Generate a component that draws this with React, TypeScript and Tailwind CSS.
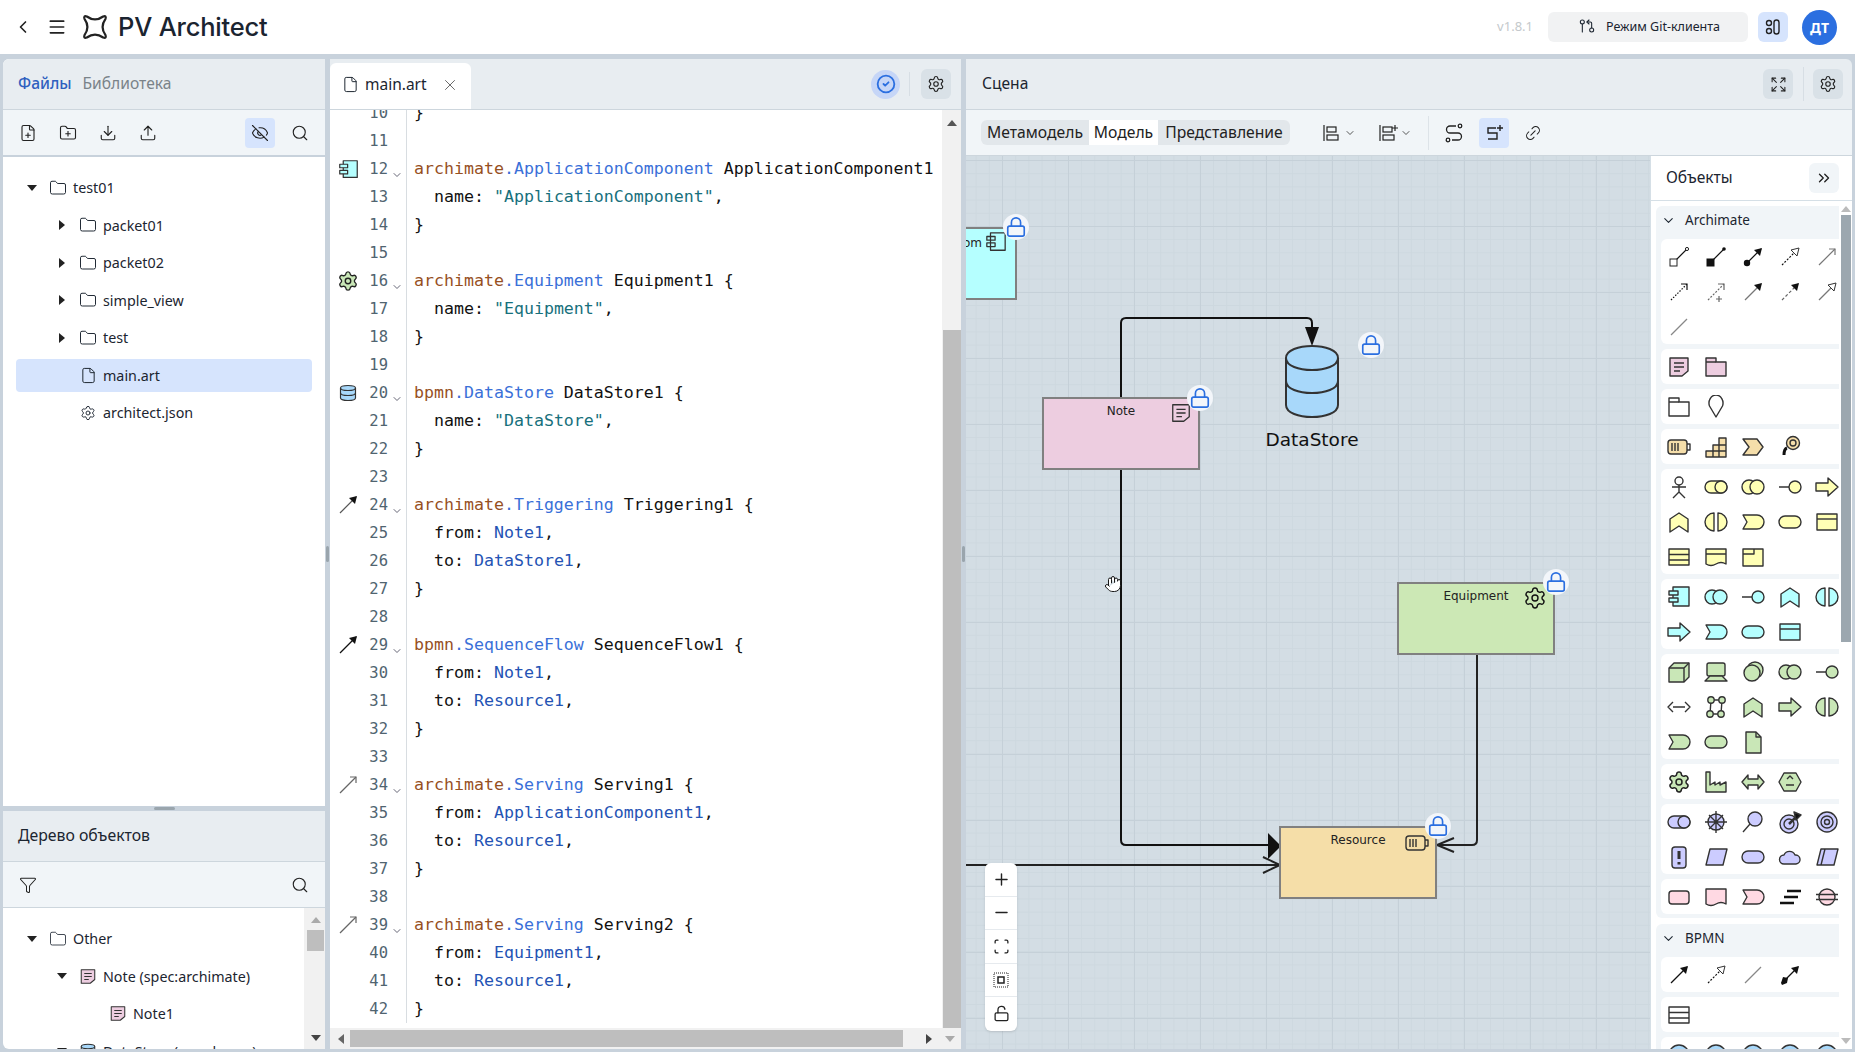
import React from 'react';
import {
  ChevronLeft, Menu, File, Folder, FilePlus, FolderPlus, Download, Upload, EyeOff, Search, Settings, X,
  CircleCheck, Expand, GitPullRequestArrow, ChevronDown, ChevronsRight, Funnel, Link2, Lock,
  LockOpen, Plus, Minus, Hand, Scan,
} from 'lucide-react';

const YELLOW = '#ffffb5';
const CYAN = '#b5ffff';
const GREEN = '#c9e7b7';
const PURPLE = '#ccccff';
const PINK = '#ffd9e3';
const TAN = '#f5deaa';
const NOTE = '#edcde0';
const BLUE = '#a8d8fa';

function Shape({ name, fill = '#fff', size = 24 }: { name: string; fill?: string; size?: number }) {
  let body: React.ReactNode = null;
  switch (name) {
    case 'note':
      body = <><path d="M3 3H21V16L15 21H3Z" /><path d="M7 8H17M7 12H17M7 16H13" fill="none" /></>;
      break;
    case 'pkg':
      body = <><path d="M2 3H12V7H22V21H2Z" /><path d="M2 7H12" fill="none" /></>;
      break;
    case 'pin':
      body = <path d="M12 22L5.5 11A7 8 0 1 1 18.500 11Z" />;
      break;
    case 'resource':
      body = <><rect x="1" y="5" width="19" height="14" rx="3" /><path d="M20 9H23V15H20M5 8V16M8 8V16M11 8V16" fill="none" /></>;
      break;
    case 'capability':
      body = <path d="M2 22V16H9V10H15V3H22V22ZM9 16H22M15 10H22M9 16V22M15 10V22" />;
      break;
    case 'chevron':
      body = <path d="M2 4H16L22 12L16 20H2L8 12Z" />;
      break;
    case 'course':
      body = <><circle cx="15" cy="8" r="6.500" /><circle cx="15" cy="8" r="3" /><path d="M9 13Q6 14 6 20" fill="none" strokeWidth="3" stroke="#111" /></>;
      break;
    case 'actor':
      body = <><circle cx="12" cy="6" r="4" /><path d="M12 10V17M5 12H19M12 17L6 23M12 17L18 23" fill="none" /></>;
      break;
    case 'collab':
      body = <><rect x="1" y="6" width="22" height="12" rx="6" /><circle cx="17" cy="12" r="6" /></>;
      break;
    case 'inter':
      body = <><circle cx="8" cy="12" r="7" /><circle cx="16" cy="12" r="7" /></>;
      break;
    case 'iface':
      body = <><path d="M1 12H11" fill="none" /><circle cx="17" cy="12" r="6" /></>;
      break;
    case 'arrow':
      body = <path d="M1 8H13V3L23 12L13 21V16H1Z" />;
      break;
    case 'fn':
      body = <path d="M3 22V9L12 3L21 9V22L12 16Z" />;
      break;
    case 'halves':
      body = <path d="M10 3A9 9 0 0 0 10 21ZM14 3A9 9 0 0 1 14 21Z" />;
      break;
    case 'event':
      body = <path d="M2 5H16A7 7 0 0 1 16 19H2L6 12Z" />;
      break;
    case 'service':
      body = <rect x="1" y="6" width="22" height="12" rx="6" />;
      break;
    case 'object':
      body = <><rect x="2" y="4" width="20" height="16" /><path d="M2 9H22" fill="none" /></>;
      break;
    case 'contract':
      body = <><rect x="2" y="4" width="20" height="16" /><path d="M2 9.500H22M2 15H22" fill="none" /></>;
      break;
    case 'repr':
      body = <><path d="M2 4H22V19Q17 16 12 19T2 19Z" /><path d="M2 9H22" fill="none" /></>;
      break;
    case 'product':
      body = <><rect x="2" y="4" width="20" height="17" /><path d="M2 9H13V4" fill="none" /></>;
      break;
    case 'component':
      body = <><rect x="6" y="2" width="16" height="19" /><rect x="2" y="6" width="9" height="4" /><rect x="2" y="13" width="9" height="4" /></>;
      break;
    case 'cube':
      body = <><path d="M2 8L7 3H22V17L17 22H2Z" /><path d="M2 8H17V22M17 8L22 3" fill="none" /></>;
      break;
    case 'device':
      body = <><rect x="3" y="3" width="18" height="13" rx="2" /><path d="M6 16H18L23 21H1Z" /></>;
      break;
    case 'system':
      body = <><circle cx="14" cy="10" r="8" /><circle cx="11" cy="13" r="8" /></>;
      break;
    case 'path':
      body = <path d="M6 7L1 12L6 17M18 7L23 12L18 17M6 12H18" fill="none" strokeDasharray="none" />;
      break;
    case 'network':
      body = <><path d="M7 5H18L17 19H6Z" fill="none" /><circle cx="7" cy="5" r="3.200" /><circle cx="18" cy="5" r="3.200" /><circle cx="6" cy="19" r="3.200" /><circle cx="17" cy="19" r="3.200" /></>;
      break;
    case 'artifact':
      body = <><path d="M5 2H15L20 7V23H5Z" /><path d="M15 2V7H20" fill="none" /></>;
      break;
    case 'gear':
      return <Settings size={size} fill={fill} stroke="#222" strokeWidth={1.500} />;
    case 'factory':
      body = <path d="M2 2H6V15L11 12V15L16 12V15L22 12V22H2Z" />;
      break;
    case 'dist':
      body = <path d="M7 5L1 12L7 19V15H17V19L23 12L17 5V9H7Z" />;
      break;
    case 'hex':
      body = <><path d="M6 3H18L23 12L18 21H6L1 12Z" /><path d="M8 15H16M9 9L12 6L15 9" fill="none" /></>;
      break;
    case 'driver':
      body = <><circle cx="12" cy="12" r="8" /><path d="M12 1V23M1 12H23M5 5L19 19M19 5L5 19" fill="none" /></>;
      break;
    case 'assess':
      body = <><circle cx="14" cy="9" r="7" /><path d="M9 14L2 22" fill="none" /></>;
      break;
    case 'goal':
      body = <><circle cx="11" cy="14" r="9" /><circle cx="11" cy="14" r="5" /><path d="M11 14L20 5" fill="none" strokeWidth="2.500" /><path d="M16 2L23 5L18 10Z" style={{ fill: '#111' }} /></>;
      break;
    case 'outcome':
      body = <><circle cx="12" cy="12" r="10" /><circle cx="12" cy="12" r="6" /><circle cx="12" cy="12" r="2.500" /></>;
      break;
    case 'principle':
      body = <><rect x="5" y="2" width="14" height="21" rx="3" /><path d="M12 6V14M12 17V19.500" fill="none" strokeWidth="3" /></>;
      break;
    case 'req':
      body = <path d="M6 4H23L19 20H2Z" />;
      break;
    case 'constraint':
      body = <path d="M6 4H23L19 20H2ZM10 4L6 20" />;
      break;
    case 'cloud':
      body = <path d="M6 19A4.500 4.500 0 0 1 6 10A6 6 0 0 1 17 10A4.500 4.500 0 0 1 18 19Z" />;
      break;
    case 'work':
      body = <rect x="2" y="6" width="20" height="13" rx="3" />;
      break;
    case 'deliver':
      body = <path d="M2 4H22V19Q17 16 12 19T2 19Z" />;
      break;
    case 'plateau':
      body = <path d="M9 6H23M6 12H20M2 18H16" fill="none" stroke="#111" strokeWidth="2.500" />;
      break;
    case 'gap':
      body = <><circle cx="12" cy="12" r="8" /><path d="M1 9.500H23M1 14.500H23" fill="none" /></>;
      break;
    case 'grouping':
      body = <><path d="M2 3H12V7H22V21H2Z" /><path d="M2 7H12" fill="none" /></>;
      break;
    case 'datastore':
      body = <><path d="M3 6C3 2 21 2 21 6V18C21 22 3 22 3 18Z" /><path d="M3 6C3 10 21 10 21 6M3 12C3 16 21 16 21 12" fill="none" /></>;
      break;
    case 'ball':
      body = <circle cx="12" cy="12" r="10" />;
      break;
  }
  return (
    <svg width={size} height={size} viewBox="0 0 24 24" fill={fill} stroke="#333" strokeWidth={1.400} strokeLinejoin="round">
      {body}
    </svg>
  );
}

function Rel({ color = '#111', dash, start, head, size = 20 }: { color?: string; dash?: string; start?: string; head?: string; size?: number }) {
  return (
    <svg width={size} height={size} viewBox="0 0 20 20" fill="none">
      <path d="M2 18L18 2" stroke={color} strokeWidth={1.200} strokeDasharray={dash} />
      {start === 'openSquare' && <rect x="1" y="12" width="7" height="7" fill="#fff" stroke="#222" />}
      {start === 'square' && <rect x="1" y="12" width="7" height="7" fill="#111" stroke="#111" />}
      {start === 'dot' && <circle cx="4" cy="16" r="3.200" fill="#111" />}
      {start === 'diamond' && <path d="M1 18L3 12L8 13L7 18L2 20Z" fill="#111" />}
      {head === 'smallOpen' && <circle cx="18" cy="2" r="1.600" fill="#fff" stroke="#222" />}
      {head === 'small' && <circle cx="18" cy="2" r="1.800" fill="#111" />}
      {head === 'fill' && <path d="M19 1L11 3L17 9Z" fill="#111" />}
      {head === 'open' && <path d="M12 2H18V8" stroke={color} strokeWidth={1.200} />}
      {head === 'hollow' && <path d="M19 1L11 3L17 9Z" fill="#fff" stroke="#333" />}
      {head === 'plus' && <path d="M12 2H18V8M13 14V20M10 17H16" stroke={color} strokeWidth={1.200} />}
    </svg>
  );
}

const relsA = [
  <Rel start="openSquare" head="smallOpen" />,
  <Rel start="square" head="small" />,
  <Rel start="dot" head="fill" />,
  <Rel dash="2 1.500" head="hollow" />,
  <Rel color="#777" head="open" />,
  <Rel dash="1.500 1.500" head="open" />,
  <Rel dash="2 1.500" color="#666" head="plus" />,
  <Rel color="#777" head="fill" />,
  <Rel dash="3 2" color="#666" head="fill" />,
  <Rel color="#777" head="hollow" />,
  <Rel color="#888" />,
];

const shapeCards: [string, string][][] = [
  [['note', NOTE], ['pkg', NOTE]],
  [['grouping', '#fff'], ['pin', '#fff']],
  [['resource', TAN], ['capability', TAN], ['chevron', TAN], ['course', TAN]],
  [['actor', '#fff'], ['collab', YELLOW], ['inter', YELLOW], ['iface', YELLOW], ['arrow', YELLOW], ['fn', YELLOW], ['halves', YELLOW], ['event', YELLOW], ['service', YELLOW], ['object', YELLOW], ['contract', YELLOW], ['repr', YELLOW], ['product', YELLOW]],
  [['component', CYAN], ['inter', CYAN], ['iface', CYAN], ['fn', CYAN], ['halves', CYAN], ['arrow', CYAN], ['event', CYAN], ['service', CYAN], ['object', CYAN]],
  [['cube', GREEN], ['device', GREEN], ['system', GREEN], ['inter', GREEN], ['iface', GREEN], ['path', 'none'], ['network', GREEN], ['fn', GREEN], ['arrow', GREEN], ['halves', GREEN], ['event', GREEN], ['service', GREEN], ['artifact', GREEN]],
  [['gear', GREEN], ['factory', GREEN], ['dist', GREEN], ['hex', GREEN]],
  [['collab', PURPLE], ['driver', PURPLE], ['assess', PURPLE], ['goal', PURPLE], ['outcome', PURPLE], ['principle', PURPLE], ['req', PURPLE], ['service', PURPLE], ['cloud', PURPLE], ['constraint', PURPLE]],
  [['work', PINK], ['deliver', PINK], ['event', PINK], ['plateau', PINK], ['gap', PINK]],
];

function Card({ children }: { children: React.ReactNode }) {
  return (
    <div className="bg-white rounded-l-md overflow-hidden">
      <div className="grid grid-cols-[repeat(5,37px)] auto-rows-[35px] -ml-[1px] w-[185px]">{children}</div>
    </div>
  );
}

function Cell({ children }: { children: React.ReactNode }) {
  return <div className="flex items-center justify-center">{children}</div>;
}

function Tri({ dir, color = '#666' }: { dir: 'up' | 'down' | 'left' | 'right'; color?: string }) {
  const pts = { up: '5,2 10,8 0,8', down: '0,2 10,2 5,8', left: '8,0 8,10 2,5', right: '2,0 2,10 8,5' }[dir];
  return (
    <svg width="10" height="10" viewBox="0 0 10 10">
      <polygon points={pts} fill={color} />
    </svg>
  );
}

type Tok = [string, string];
const B = 'text-[#97501f]';
const T = 'text-[#3a70d8]';
const K = 'text-[#111]';
const S = 'text-[#17707c]';
const R = 'text-[#2453b4]';

function decl(ns: string, type: string, id: string): Tok[] {
  return [[ns, B], ['.' + type, T], [' ' + id + ' {', K]];
}
const nameLine = (v: string): Tok[] => [['  name: ', K], ['"' + v + '"', S], [',', K]];
const fromLine = (v: string): Tok[] => [['  from: ', K], [v, R], [',', K]];
const toLine = (v: string): Tok[] => [['  to: ', K], [v, R], [',', K]];
const close: Tok[] = [['}', K]];

const code: { n: number; t: Tok[]; icon?: React.ReactNode }[] = [
  { n: 10, t: close },
  { n: 11, t: [] },
  { n: 12, t: [['archimate', B], ['.ApplicationComponent', T], [' ApplicationComponent1', K]], icon: <Shape name="component" fill={CYAN} size={21} /> },
  { n: 13, t: nameLine('ApplicationComponent') },
  { n: 14, t: close },
  { n: 15, t: [] },
  { n: 16, t: decl('archimate', 'Equipment', 'Equipment1'), icon: <Shape name="gear" fill={GREEN} size={22} /> },
  { n: 17, t: nameLine('Equipment') },
  { n: 18, t: close },
  { n: 19, t: [] },
  { n: 20, t: decl('bpmn', 'DataStore', 'DataStore1'), icon: <Shape name="datastore" fill={BLUE} size={20} /> },
  { n: 21, t: nameLine('DataStore') },
  { n: 22, t: close },
  { n: 23, t: [] },
  { n: 24, t: decl('archimate', 'Triggering', 'Triggering1'), icon: <Rel color="#555" head="fill" /> },
  { n: 25, t: fromLine('Note1') },
  { n: 26, t: toLine('DataStore1') },
  { n: 27, t: close },
  { n: 28, t: [] },
  { n: 29, t: decl('bpmn', 'SequenceFlow', 'SequenceFlow1'), icon: <Rel head="fill" /> },
  { n: 30, t: fromLine('Note1') },
  { n: 31, t: toLine('Resource1') },
  { n: 32, t: close },
  { n: 33, t: [] },
  { n: 34, t: decl('archimate', 'Serving', 'Serving1'), icon: <Rel color="#666" head="open" /> },
  { n: 35, t: fromLine('ApplicationComponent1') },
  { n: 36, t: toLine('Resource1') },
  { n: 37, t: close },
  { n: 38, t: [] },
  { n: 39, t: decl('archimate', 'Serving', 'Serving2'), icon: <Rel color="#666" head="open" /> },
  { n: 40, t: fromLine('Equipment1') },
  { n: 41, t: toLine('Resource1') },
  { n: 42, t: close },
];

function TreeRow({ level, caret, icon, label, active }: { level: number; caret?: 'open' | 'closed'; icon: React.ReactNode; label: string; active?: boolean }) {
  const padding = level === 0 ? 'pl-[11px]' : level === 1 ? 'pl-[41px]' : 'pl-[71px]';
  const box = active ? 'h-[33px] my-[2.250px] bg-[#d6e4fd]' : 'h-[37.5px]';
  return (
    <div className={`shrink-0 flex items-center rounded-sm text-[14.300px] text-[#1c2530] ${box} ${padding}`}>
      <span className="w-[10px] h-[10px] flex items-center justify-center mr-[12px]">
        {caret && <Tri dir={caret === 'open' ? 'down' : 'right'} color="#222" />}
      </span>
      <span className="w-[18px] flex items-center justify-center mr-[6px]">{icon}</span>
      <span className="whitespace-nowrap">{label}</span>
    </div>
  );
}

function LockBadge({ className }: { className: string }) {
  return (
    <div className={`absolute w-[26px] h-[26px] -ml-[13px] -mt-[13px] rounded-full bg-[#f3f6fa] flex items-center justify-center ${className}`}>
      <Lock size={22} color="#2b6fe0" strokeWidth={1.800} />
    </div>
  );
}

function DiagramNode({ className, label, fill, icon }: { className: string; label: string; fill: string; icon: React.ReactNode }) {
  return (
    <div className={`absolute w-[158px] h-[73px] border-2 border-[#808080] flex justify-center ${fill} ${className}`}>
      <span className="mt-[4px] text-[12px] leading-[16px] text-[#222] font-['DejaVu_Sans',sans-serif]">{label}</span>
      <span className="absolute right-[6px] top-[3px]">{icon}</span>
    </div>
  );
}

export default function App() {
  return (
    <div className="h-screen w-full overflow-hidden flex flex-col bg-[#c8d2dc] font-['Noto_Sans',sans-serif]">
      {/* top bar */}
      <header className="h-[54px] shrink-0 bg-white flex items-center">
        <ChevronLeft size={20} strokeWidth={2} className="ml-[13px] text-[#222]" />
        <Menu size={20} strokeWidth={2} className="ml-[14px] text-[#222]" />
        <svg width="28" height="28" viewBox="0 0 24 24" fill="none" stroke="#222" strokeWidth={1.900} className="ml-[14px]">
          <path d="M5 3Q12 8 19 3Q22 2 21 5Q16 12 21 19Q22 22 19 21Q12 16 5 21Q2 22 3 19Q8 12 3 5Q2 2 5 3Z" />
        </svg>
        <span className="ml-[9px] text-[25.500px] font-medium text-[#1b2430] font-['Inter',sans-serif] tracking-[-0.2px]">PV Architect</span>
        <span className="ml-auto text-[13px] text-[#c4c9cc]">v1.8.1</span>
        <button className="ml-[15px] w-[200px] h-[30px] rounded-md bg-[#f1f2f3] flex items-center justify-center gap-[11px] pl-[3px] text-[12.500px] text-[#1b2430]">
          <GitPullRequestArrow size={16} strokeWidth={1.600} className="-mt-[3px]" />
          <span>Режим Git-клиента</span>
        </button>
        <button className="ml-[10px] w-[30px] h-[30px] rounded-md bg-[#d6e4fd] flex items-center justify-center">
          <svg width="18" height="18" viewBox="0 0 18 18" fill="none" stroke="#222" strokeWidth={1.400}>
            <circle cx="5" cy="5" r="2.500" /><circle cx="5" cy="13" r="2.500" /><rect x="10" y="2" width="5" height="14" rx="2.500" />
          </svg>
        </button>
        <div className="ml-[14px] mr-[18px] w-[35px] h-[35px] rounded-full bg-[#2b6fe0] text-white text-[14px] font-bold flex items-center justify-center">ДТ</div>
      </header>

      <main className="flex-1 min-h-0 flex pt-[5px] pb-[3px] pl-[3px] pr-[3px]">
        {/* left column */}
        <div className="w-[322px] shrink-0 flex flex-col">
          <section className="flex-1 min-h-0 bg-white rounded-tl-md flex flex-col overflow-hidden">
            <div className="h-[51px] shrink-0 bg-[#e8edf1] border-b border-[#cdd6dd] flex items-center pl-[15px] gap-[11px] text-[15.600px]">
              <span className="text-[#2e5fbf] font-medium">Файлы</span>
              <span className="text-[#7a8389]">Библиотека</span>
            </div>
            <div className="h-[47px] shrink-0 bg-[#f1f5f8] border-b-2 border-[#c8d2dc] flex items-center text-[#222]">
              <FilePlus size={18} strokeWidth={1.500} className="ml-[16px]" />
              <FolderPlus size={18} strokeWidth={1.500} className="ml-[22px]" />
              <Download size={18} strokeWidth={1.500} className="ml-[22px]" />
              <Upload size={18} strokeWidth={1.500} className="ml-[22px]" />
              <span className="ml-[88px] w-[30px] h-[30px] rounded-sm bg-[#d6e4fd] flex items-center justify-center">
                <EyeOff size={18} strokeWidth={1.500} />
              </span>
              <Search size={18} strokeWidth={1.500} className="ml-[16px]" />
            </div>
            <div className="px-[13px] pt-[12px] flex flex-col">
              <TreeRow level={0} caret="open" icon={<Folder size={18} strokeWidth={1.300} />} label="test01" />
              <TreeRow level={1} caret="closed" icon={<Folder size={18} strokeWidth={1.300} />} label="packet01" />
              <TreeRow level={1} caret="closed" icon={<Folder size={18} strokeWidth={1.300} />} label="packet02" />
              <TreeRow level={1} caret="closed" icon={<Folder size={18} strokeWidth={1.300} />} label="simple_view" />
              <TreeRow level={1} caret="closed" icon={<Folder size={18} strokeWidth={1.300} />} label="test" />
              <TreeRow level={1} active icon={<File size={17} strokeWidth={1.400} />} label="main.art" />
              <TreeRow level={1} icon={<Settings size={16} strokeWidth={1.400} />} label="architect.json" />
            </div>
          </section>
          <div className="h-[5px] shrink-0 flex justify-center">
            <div className="w-[21px] h-[3px] mt-[1px] bg-[#9aa5ad] rounded-sm" />
          </div>
          <section className="h-[238px] shrink-0 bg-white rounded-bl-md flex flex-col overflow-hidden">
            <div className="h-[51px] shrink-0 bg-[#e8edf1] border-b border-[#cdd6dd] flex items-center pl-[15px] text-[15.800px] text-[#1c2530]">Дерево объектов</div>
            <div className="h-[46px] shrink-0 bg-[#f1f5f8] border-b border-[#cdd6dd] flex items-center justify-between px-[16px] text-[#222]">
              <Funnel size={18} strokeWidth={1.400} />
              <Search size={18} strokeWidth={1.500} />
            </div>
            <div className="flex-1 min-h-0 flex">
              <div className="flex-1 min-w-0 overflow-hidden px-[13px] pt-[12px] flex flex-col">
                <TreeRow level={0} caret="open" icon={<Folder size={18} strokeWidth={1.100} />} label="Other" />
                <TreeRow level={1} caret="open" icon={<Shape name="note" fill={NOTE} size={21} />} label="Note (spec:archimate)" />
                <TreeRow level={2} icon={<Shape name="note" fill={NOTE} size={21} />} label="Note1" />
                <TreeRow level={1} caret="open" icon={<Shape name="datastore" fill={BLUE} size={20} />} label="DataStore (spec:bpmn)" />
              </div>
              <div className="w-[21px] shrink-0 bg-[#f1f1f1] flex flex-col items-center pl-[2px]">
                <span className="mt-[7px]"><Tri dir="up" color="#aaa" /></span>
                <div className="w-[17px] h-[21px] mt-[5px] bg-[#bebebe]" />
                <span className="mt-auto mb-[6px]"><Tri dir="down" color="#444" /></span>
              </div>
            </div>
          </section>
        </div>

        <div className="w-[5px] shrink-0 flex items-center">
          <div className="w-[3px] h-[16px] bg-[#9aa5ad] rounded-sm ml-[1px]" />
        </div>

        {/* editor */}
        <section className="w-[631px] shrink-0 flex flex-col bg-white overflow-hidden">
          <div className="h-[51px] shrink-0 bg-[#e8edf1] border-b border-[#cdd6dd] flex items-end">
            <div className="w-[141px] h-[46px] bg-white rounded-t-md flex items-center pl-[12px] pb-[3px] text-[15.500px] text-[#1c2530]">
              <File size={17} strokeWidth={1.400} />
              <span className="ml-[6px]">main.art</span>
              <X size={18} strokeWidth={1.300} className="ml-[14px] text-[#666]" />
            </div>
            <div className="ml-auto h-[50px] flex items-center">
              <span className="w-[29px] h-[29px] rounded-full bg-[#c6d6f7] flex items-center justify-center">
                <CircleCheck size={20} strokeWidth={2.200} className="text-[#2b6fe0]" />
              </span>
              <span className="w-px h-[24px] bg-[#d7dee4] ml-[9px]" />
              <span className="ml-[11px] mr-[10px] w-[30px] h-[30px] rounded-md bg-[#d9e1e7] flex items-center justify-center">
                <Settings size={18} strokeWidth={1.500} className="text-[#222]" />
              </span>
            </div>
          </div>
          <div className="flex-1 min-h-0 flex">
            <div className="flex-1 min-w-0 overflow-hidden font-['DejaVu_Sans_Mono',monospace] text-[16.600px]">
              <div className="-mt-[11px]">
                {code.map((line) => {
                  const foldable = !!line.icon;
                  return (
                    <div key={line.n} className="h-[28px] flex items-center leading-[28px] whitespace-pre">
                      <span className="w-[36px] shrink-0 flex items-center justify-center">{line.icon}</span>
                      <span className="w-[22px] shrink-0 text-right text-[#506470] text-[15.500px]">{line.n}</span>
                      <span className="w-[18px] shrink-0 flex items-center justify-center pt-[12px]">
                        {foldable && <ChevronDown size={12} strokeWidth={1.800} className="text-[#556]" />}
                      </span>
                      <span className="h-[28px] border-l border-[#d8dde1] pl-[7px]">
                        {line.t.map((tok, i) => (
                          <span key={i} className={tok[1]}>{tok[0]}</span>
                        ))}
                      </span>
                    </div>
                  );
                })}
              </div>
            </div>
            <div className="w-[19px] shrink-0 bg-[#f1f1f1] flex flex-col items-center">
              <span className="mt-[8px]"><Tri dir="up" color="#555" /></span>
              <div className="mt-[202px] flex-1 w-[18px] bg-[#bebebe]" />
            </div>
          </div>
          <div className="h-[21px] shrink-0 bg-[#f1f1f1] flex items-center">
            <span className="ml-[6px]"><Tri dir="left" color="#666" /></span>
            <div className="ml-[4px] w-[553px] h-[17px] bg-[#bebebe]" />
            <span className="ml-[21px]"><Tri dir="right" color="#444" /></span>
            <span className="ml-[11px]"><Tri dir="down" color="#aaa" /></span>
          </div>
        </section>

        <div className="w-[5px] shrink-0 flex items-center">
          <div className="w-[3px] h-[16px] bg-[#9aa5ad] rounded-sm ml-[1px]" />
        </div>

        {/* scene */}
        <section className="flex-1 min-w-0 flex flex-col rounded-tr-md overflow-hidden">
          <div className="h-[51px] shrink-0 bg-[#e8edf1] border-b border-[#cdd6dd] flex items-center pl-[16px] text-[15.600px] text-[#1c2530]">
            <span>Сцена</span>
            <span className="ml-auto w-[30px] h-[30px] rounded-md bg-[#d9e1e7] flex items-center justify-center">
              <Expand size={17} strokeWidth={1.500} className="text-[#222]" />
            </span>
            <span className="w-px h-[34px] bg-[#d7dee4] ml-[10px]" />
            <span className="ml-[9px] mr-[9px] w-[30px] h-[30px] rounded-md bg-[#d9e1e7] flex items-center justify-center">
              <Settings size={18} strokeWidth={1.500} className="text-[#222]" />
            </span>
          </div>
          <div className="h-[46px] shrink-0 bg-[#f1f5f8] border-b border-[#cdd6dd] flex items-center pl-[15px] text-[#222]">
            <div className="w-[309px] h-[25px] rounded-md bg-[#e2e7eb] flex items-center text-[15.700px] text-[#222]">
              <span className="w-[108px] text-center">Метамодель</span>
              <span className="w-[69px] h-[25px] leading-[25px] text-center bg-white">Модель</span>
              <span className="flex-1 text-center">Представление</span>
            </div>
            <svg width="16" height="20" viewBox="0 0 16 20" fill="none" stroke="#222" strokeWidth={1.200} className="ml-[33px]">
              <path d="M1 2V18" /><rect x="4" y="4" width="9" height="5" /><rect x="4" y="12" width="11" height="5" />
            </svg>
            <ChevronDown size={12} strokeWidth={1.500} className="ml-[5px]" />
            <svg width="20" height="20" viewBox="0 0 20 20" fill="none" stroke="#222" strokeWidth={1.200} className="ml-[23px]">
              <path d="M1 2V18" /><rect x="4" y="4" width="9" height="5" /><rect x="4" y="12" width="11" height="5" /><path d="M16 2V8M13 5H19" />
            </svg>
            <ChevronDown size={12} strokeWidth={1.500} className="ml-[1px]" />
            <span className="w-px h-[34px] bg-[#dde3e8] ml-[16px]" />
            <svg width="20" height="20" viewBox="0 0 20 20" fill="none" stroke="#222" strokeWidth={1.300} className="ml-[15px]">
              <circle cx="16" cy="3" r="1.800" /><circle cx="4" cy="17" r="1.800" /><path d="M12 3H6A3 3 0 0 0 6 10H14A3 3 0 0 1 14 17H8" />
            </svg>
            <span className="ml-[15px] w-[30px] h-[30px] rounded-sm bg-[#d6e4fd] flex items-center justify-center">
              <svg width="20" height="20" viewBox="0 0 20 20" fill="none" stroke="#222" strokeWidth={1.400}>
                <path d="M12 5H4V10H13V16H4M16 2V8M13 5H19" />
              </svg>
            </span>
            <Link2 size={18} strokeWidth={1.400} className="ml-[15px] -rotate-45" />
          </div>
          <div className="flex-1 min-h-0 flex">
            {/* free canvas */}
            <div className="flex-1 min-w-0 relative overflow-hidden bg-[#d3dde4] [background-image:linear-gradient(#c5d0d8_1.5px,transparent_1.5px),linear-gradient(90deg,#c5d0d8_1.5px,transparent_1.5px),linear-gradient(#cdd8df_1px,transparent_1px),linear-gradient(90deg,#cdd8df_1px,transparent_1px)] [background-size:66px_66px,66px_66px,13.2px_13.2px,13.2px_13.2px] [background-position:36px_4px]">
              <svg className="absolute inset-0" width="684" height="893" viewBox="966 156 684 893" fill="none">
                <path d="M1121 397V323Q1121 318 1126 318H1307Q1312 318 1312 323V330" stroke="#111" strokeWidth={2} />
                <path d="M1305 327H1319L1312 346Z" fill="#111" />
                <path d="M1121 470V840Q1121 845 1126 845H1270" stroke="#111" strokeWidth={2} />
                <path d="M1268 833L1281 846L1268 859Z" fill="#111" />
                <path d="M966 865H1280M1263 857L1280 865L1263 873" stroke="#222" strokeWidth={2} />
                <path d="M1477 654V840Q1477 845 1472 845H1437M1454 838L1437 845L1454 852" stroke="#222" strokeWidth={2} />
                <path d="M1286 358C1286 342 1338 342 1338 358V405C1338 421 1286 421 1286 405Z" fill={BLUE} stroke="#333" strokeWidth={2} />
                <path d="M1286 358C1286 374 1338 374 1338 358M1286 381C1286 397 1338 397 1338 381" stroke="#333" strokeWidth={2} />
              </svg>

              <div className="absolute -left-[60px] top-[71px] w-[111px] h-[73px] bg-[#b5ffff] border-2 border-[#808080] text-[12px] text-[#222] font-['DejaVu_Sans',sans-serif]">
                <span className="absolute right-[33px] top-[5px]">om</span>
                <span className="absolute right-[8px] top-[2px]"><Shape name="component" fill="none" size={22} /></span>
              </div>
              <DiagramNode className="left-[76px] top-[241px]" label="Note" fill="bg-[#edcde0]" icon={<Shape name="note" fill="none" size={22} />} />
              <DiagramNode className="left-[431px] top-[426px]" label="Equipment" fill="bg-[#cce8b5]" icon={<Settings size={24} strokeWidth={1.400} className="text-[#111] -mt-[1px]" />} />
              <DiagramNode className="left-[313px] top-[670px]" label="Resource" fill="bg-[#f5dea8]" icon={<Shape name="resource" fill="none" size={24} />} />

              <span className="absolute left-[286px] top-[270px] w-[120px] text-center text-[18.500px] text-[#111] font-['DejaVu_Sans',sans-serif] whitespace-nowrap">DataStore</span>

              <LockBadge className="left-[50px] top-[71px]" />
              <LockBadge className="left-[234px] top-[242px]" />
              <LockBadge className="left-[405px] top-[189px]" />
              <LockBadge className="left-[590px] top-[426px]" />
              <LockBadge className="left-[472px] top-[670px]" />

              <Hand size={18} strokeWidth={1.300} fill="#fff" className="absolute left-[138px] top-[419px] text-[#111]" />

              <div className="absolute left-[19px] top-[707px] w-[32px] bg-white rounded-md shadow-sm flex flex-col text-[#222] divide-y divide-[#e6eaee]">
                <span className="h-[33.500px] flex items-center justify-center"><Plus size={19} strokeWidth={1.800} /></span>
                <span className="h-[33.500px] flex items-center justify-center"><Minus size={19} strokeWidth={1.800} /></span>
                <span className="h-[33.500px] flex items-center justify-center"><Scan size={17} strokeWidth={1.800} /></span>
                <span className="h-[33.500px] flex items-center justify-center">
                  <svg width="16" height="16" viewBox="0 0 16 16" fill="none" stroke="#222">
                    <rect x="1" y="1" width="14" height="14" strokeDasharray="1 1" /><rect x="5" y="5" width="6" height="6" strokeWidth={1.500} />
                  </svg>
                </span>
                <span className="h-[33.500px] flex items-center justify-center"><LockOpen size={17} strokeWidth={1.800} /></span>
              </div>
            </div>

            {/* objects palette */}
            <aside className="w-[202px] shrink-0 bg-white border-l border-[#d5dfe6] flex flex-col">
              <div className="h-[45px] shrink-0 border-b border-[#d5dfe6] flex items-center pl-[15px] text-[15.600px] text-[#1c2530]">
                <span>Объекты</span>
                <span className="ml-auto mr-[13px] w-[30px] h-[30px] rounded-md bg-[#f1f5f8] flex items-center justify-center">
                  <ChevronsRight size={18} strokeWidth={1.800} className="text-[#222]" />
                </span>
              </div>
              <div className="flex-1 min-h-0 flex">
                <div className="w-[188px] shrink-0 overflow-hidden pl-[5px] pt-[5px] flex flex-col gap-[6px]">
                  <div className="bg-[#f1f5f8] rounded-l-md pl-[5px] pb-[4px] flex flex-col gap-[5px]">
                    <div className="h-[28px] flex items-center gap-[9px] text-[13.500px] text-[#1c2530]">
                      <ChevronDown size={15} strokeWidth={1.700} />
                      <span>Archimate</span>
                    </div>
                    <Card>{relsA.map((r, i) => <Cell key={i}>{r}</Cell>)}</Card>
                    {shapeCards.map((card, i) => (
                      <Card key={i}>
                        {card.map(([name, fill], j) => (
                          <Cell key={j}><Shape name={name} fill={fill} /></Cell>
                        ))}
                      </Card>
                    ))}
                  </div>
                  <div className="bg-[#f1f5f8] rounded-l-md pl-[5px] flex flex-col gap-[5px]">
                    <div className="h-[28px] flex items-center gap-[9px] text-[13.500px] text-[#1c2530]">
                      <ChevronDown size={15} strokeWidth={1.700} />
                      <span>BPMN</span>
                    </div>
                    <Card>
                      <Cell><Rel head="fill" /></Cell>
                      <Cell><Rel dash="2 1.500" head="hollow" /></Cell>
                      <Cell><Rel color="#888" /></Cell>
                      <Cell><Rel start="diamond" head="fill" /></Cell>
                    </Card>
                    <Card><Cell><Shape name="contract" /></Cell></Card>
                    <Card>
                      {[0, 1, 2, 3, 4].map((i) => <Cell key={i}><Shape name="ball" fill={BLUE} /></Cell>)}
                    </Card>
                  </div>
                </div>
                <div className="flex-1 flex flex-col items-center">
                  <span className="mt-[3px]"><Tri dir="up" color="#bbb" /></span>
                  <div className="w-[10px] h-[427px] mt-[1px] bg-[#9ca7af]" />
                  <span className="mt-auto mb-[3px]"><Tri dir="down" color="#bbb" /></span>
                </div>
              </div>
            </aside>
          </div>
        </section>
      </main>
    </div>
  );
}
